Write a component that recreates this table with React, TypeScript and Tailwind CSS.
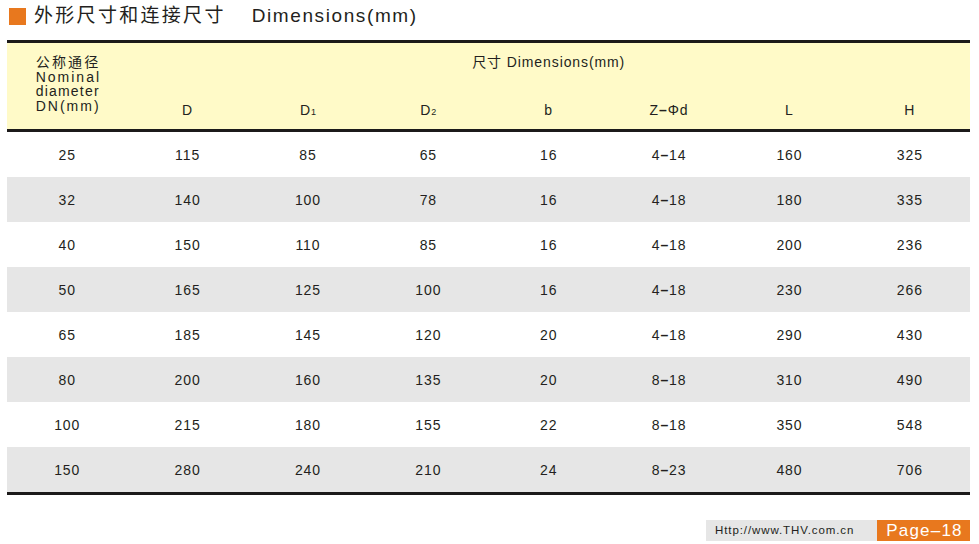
import React from "react";

const rows: string[][] = [
  ["25", "115", "85", "65", "16", "4–14", "160", "325"],
  ["32", "140", "100", "78", "16", "4–18", "180", "335"],
  ["40", "150", "110", "85", "16", "4–18", "200", "236"],
  ["50", "165", "125", "100", "16", "4–18", "230", "266"],
  ["65", "185", "145", "120", "20", "4–18", "290", "430"],
  ["80", "200", "160", "135", "20", "8–18", "310", "490"],
  ["100", "215", "180", "155", "22", "8–18", "350", "548"],
  ["150", "280", "240", "210", "24", "8–23", "480", "706"],
];

function Dashed({ s }: { s: string }) {
  const parts = s.split("–");
  if (parts.length === 1) return <>{s}</>;
  return (
    <>
      {parts[0]}
      <span className="font-bold">–</span>
      {parts[1]}
    </>
  );
}

export default function App() {
  return (
    <div
      className="w-[979px] h-[544px] bg-white text-[#231f20] overflow-hidden"
      style={{ fontFamily: '"Liberation Sans", Arial, "Noto Sans CJK SC", sans-serif' }}
    >
      <div className="h-[40px] flex items-start pt-[8px] pl-[9px]">
        <div className="w-[17px] h-[17px] bg-[#e8781e]" />
        <div className="ml-[8px] -mt-[5px] text-[19px] leading-[26px] tracking-[1.6px] flex">
          <span className="tracking-[2.3px]">外形尺寸和连接尺寸</span>
          <span className="ml-[26px]">Dimensions(mm)</span>
        </div>
      </div>

      <div className="mx-[7px] w-[963px] border-t-[3px] border-b-[3px] border-[#1c1a1a]">
        <div className="grid grid-cols-8 grid-rows-[48px_38px] h-[89px] bg-[#fffac8] border-b-[3px] border-[#1c1a1a]">
          <div className="row-span-2 flex justify-center pt-[12px] pl-[1px]">
            <div className="w-[64px] text-[14px] leading-[14.5px] whitespace-nowrap">
              <div className="tracking-[2.2px]">公称通径</div>
              <div className="tracking-[2px]">Nominal</div>
              <div className="tracking-[1.2px]">diameter</div>
              <div className="tracking-[2px]">DN(mm)</div>
            </div>
          </div>
          <div className="col-span-7 flex justify-center items-start pt-[10px] text-[14px] leading-[18px] tracking-[0.9px]">
            尺寸&nbsp;Dimensions(mm)
          </div>
          {["D", "D1", "D2", "b", "Z–Φd", "L", "H"].map((h) => (
            <div
              key={h}
              className="flex justify-center items-start pt-[10px] text-[14px] leading-[18px] tracking-[0.9px]"
            >
              {h === "D1" || h === "D2" ? (
                <span>
                  D<span className="text-[9px] tracking-normal">{h[1]}</span>
                </span>
              ) : (
                <span>
                  <Dashed s={h} />
                </span>
              )}
            </div>
          ))}
        </div>
        {rows.map((r, i) => (
          <div
            key={i}
            className={`grid grid-cols-8 h-[45px] items-center ${i % 2 === 1 ? "bg-[#e6e6e6]" : "bg-white"}`}
          >
            {r.map((c, j) => (
              <div key={j} className="text-center text-[14px] leading-[18px] tracking-[0.9px] pt-[1px]">
                <Dashed s={c} />
              </div>
            ))}
          </div>
        ))}
      </div>

      <div className="flex justify-end mr-[9px] mt-[25px] h-[21px]">
        <div className="w-[171px] bg-[#e6e6e6] flex items-center pl-[9px] text-[11.5px] tracking-[0.9px]">
          Http://www.THV.com.cn
        </div>
        <div className="w-[93px] bg-[#e8781e] flex items-center justify-center text-white text-[17px] tracking-[1.2px] pl-[2px]">
          Page–18
        </div>
      </div>
    </div>
  );
}
